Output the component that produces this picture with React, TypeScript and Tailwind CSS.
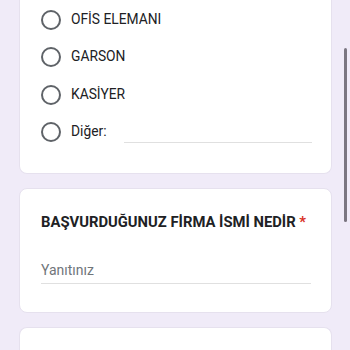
const options = ['OFİS ELEMANI', 'GARSON', 'KASİYER'];

function Radio() {
  return <span className="box-border h-[20px] w-[20px] shrink-0 rounded-full border-2 border-[#5f6368]" />;
}

export default function App() {
  return (
    <div className="relative h-[350px] w-[350px] overflow-hidden bg-[#f0ebf8] font-['Roboto',sans-serif] text-[#202124]">
      <div className="flex flex-col gap-[14px] pl-[19px] pr-[18px]">
        <div className="rounded-b-lg border border-t-0 border-[#e6e1ee] bg-white pb-[22px] pt-[1px]">
          {options.map((o) => (
            <div key={o} className="flex h-[37.5px] items-center gap-[10px] pl-[21px]">
              <Radio />
              <span className="text-[13.8px] leading-none">{o}</span>
            </div>
          ))}
          <div className="flex h-[37.5px] items-center gap-[10px] pl-[21px]">
            <Radio />
            <span className="text-[13.8px] leading-none">Diğer:</span>
            <div className="ml-[7px] mr-[19px] h-[20px] flex-1 translate-y-[1px] border-b border-[#e0e0e0]" />
          </div>
        </div>

        <div className="rounded-lg border border-[#e6e1ee] bg-white px-[21px] pb-[28px] pt-[23px]">
          <div className="whitespace-nowrap text-[14.8px] font-bold leading-[20px]">
            BAŞVURDUĞUNUZ FİRMA İSMİ NEDİR <span className="text-[#d93025]">*</span>
          </div>
          <div className="mt-[28px] mr-[-1px] border-b border-[#e0e0e0] pb-[3px] text-[14px] leading-[20px] text-[#70757a]">
            Yanıtınız
          </div>
        </div>

        <div className="h-[60px] rounded-t-lg border border-b-0 border-[#e6e1ee] bg-white" />
      </div>
      <div className="absolute right-[3px] top-[48px] h-[174px] w-[3px] rounded-full bg-[#7b7681]" />
    </div>
  );
}
